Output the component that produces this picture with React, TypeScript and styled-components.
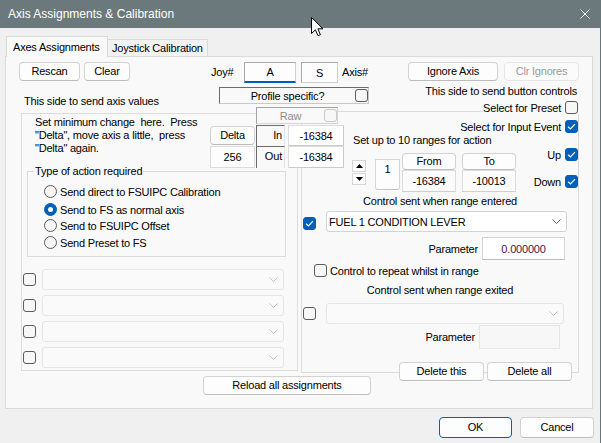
import React from "react";
import styled, { createGlobalStyle } from "styled-components";

const GlobalStyle = createGlobalStyle`
  html, body { margin: 0; padding: 0; background: #f0f0f0; }
  body { font-family: "Liberation Sans", Arial, sans-serif; font-size: 11px; letter-spacing: -0.2px; color: #000; }
  *, *::before, *::after { box-sizing: border-box; }
  button { font: inherit; letter-spacing: inherit; }
`;

const Window = styled.div`
  position: relative;
  width: 601px;
  height: 443px;
  background: #f0f0f0;
  border-right: 1px solid #68767a;
  display: flex;
  flex-direction: column;
  overflow: hidden;
`;

const TitleBar = styled.div`
  flex: none;
  height: 28px;
  background: #6b797c;
  color: #fff;
  font-size: 12px;
  letter-spacing: 0;
  display: flex;
  align-items: center;
  justify-content: space-between;
  padding: 0 10px 0 8px;
`;

const Cursor = styled.svg`
  position: absolute;
  left: 311px;
  top: 17px;
  z-index: 10;
`;

const Body = styled.div`
  flex: 1;
  display: flex;
  flex-direction: column;
  padding: 8px 0 0 5px;
`;

const TabStrip = styled.div`
  display: flex;
  align-items: flex-end;
  height: 20px;
  padding-left: 1px;
  position: relative;
  z-index: 1;
`;

const Tab = styled.div<{ $active?: boolean; $w: number }>`
  width: ${(p) => p.$w}px;
  height: ${(p) => (p.$active ? 21 : 17)}px;
  margin-bottom: ${(p) => (p.$active ? -1 : 0)}px;
  background: ${(p) => (p.$active ? "#f9f9f9" : "#f2f2f2")};
  border: 1px solid #d9d9d9;
  border-bottom: none;
  border-left: ${(p) => (p.$active ? "1px solid #d9d9d9" : "none")};
  padding-left: ${(p) => (p.$active ? 6 : 4)}px;
  display: flex;
  align-items: center;
  white-space: nowrap;
`;

const Panel = styled.div`
  position: relative;
  width: 588px;
  height: 353px;
  background: #f9f9f9;
  border: 1px solid #dadada;
  display: flex;
  flex-direction: column;
`;

const Footer = styled.div`
  display: flex;
  justify-content: flex-end;
  gap: 8px;
  margin-top: 8px;
  padding-right: 6px;
`;

const Btn = styled.button<{ $w: number; $h?: number; $default?: boolean }>`
  flex: none;
  width: ${(p) => p.$w}px;
  height: ${(p) => p.$h ?? 19}px;
  margin: 0;
  padding: 0;
  color: ${(p) => (p.disabled ? "#9a9a9a" : "#000")};
  background: ${(p) => (p.disabled ? "#fbfbfb" : "#fdfdfd")};
  border: 1px solid ${(p) => (p.$default ? "#005fb8" : p.disabled ? "#e6e6e6" : "#d2d2d2")};
  border-bottom-color: ${(p) => (p.$default ? "#005fb8" : p.disabled ? "#e6e6e6" : "#bdbdbd")};
  border-radius: 4px;
  display: flex;
  align-items: center;
  justify-content: center;
  white-space: nowrap;
  line-height: 13px;
`;

/* ---------- top row ---------- */
const TopRow = styled.div`
  display: flex;
  align-items: flex-start;
  height: 21px;
  margin-top: 5px;
  padding-left: 13px;
`;

const ButtonPair = styled.div<{ $gap: number }>`
  display: flex;
  gap: ${(p) => p.$gap}px;
`;

const JoyGroup = styled.div`
  display: flex;
  align-items: center;
  height: 21px;
  margin-left: 81px;
`;

const InlineLabel = styled.span<{ $w: number; $ml?: number }>`
  flex: none;
  width: ${(p) => p.$w}px;
  margin-left: ${(p) => p.$ml ?? 0}px;
  line-height: 21px;
  white-space: nowrap;
`;

const JoyEdit = styled.div<{ $w: number; $ml?: number; $focus?: boolean }>`
  flex: none;
  width: ${(p) => p.$w}px;
  height: 21px;
  margin-left: ${(p) => p.$ml ?? 0}px;
  background: #fdfdfd;
  border: 1px solid #cfcfcf;
  border-top-color: #a9a9a9;
  border-left-color: #a9a9a9;
  border-bottom: ${(p) => (p.$focus ? "2px solid #005fb8" : "1px solid #cfcfcf")};
  display: flex;
  justify-content: center;
  align-items: center;
`;

/* ---------- workspace ---------- */
const Workspace = styled.div`
  display: grid;
  grid-template-columns: 277px 278px;
  column-gap: 3px;
  margin-left: 15px;
  align-items: start;
`;

const Column = styled.div`
  display: flex;
  flex-direction: column;
`;

const LeftCaption = styled.div`
  margin: 12px 0 5px 3px;
  height: 13px;
  line-height: 13px;
  white-space: nowrap;
`;

const RightCaption = styled.div`
  margin-top: 2px;
  padding-right: 2px;
  height: 13px;
  line-height: 13px;
  text-align: right;
  white-space: nowrap;
`;

const CheckLabelRow = styled.div<{ $mt: number; $pr: number; $raised?: boolean }>`
  align-self: flex-end;
  display: flex;
  align-items: center;
  gap: 4px;
  height: 13px;
  margin-top: ${(p) => p.$mt}px;
  padding-right: ${(p) => p.$pr}px;
  white-space: nowrap;
  background: #f9f9f9;
  position: ${(p) => (p.$raised ? "relative" : "static")};
  z-index: ${(p) => (p.$raised ? 1 : "auto")};
`;

const Frame = styled.div<{ $h: number; $mt?: number }>`
  height: ${(p) => p.$h}px;
  margin-top: ${(p) => p.$mt ?? 0}px;
  border: 1px solid #dcdcdc;
  display: flex;
  flex-direction: column;
`;

const Description = styled.div`
  padding: 2px 0 0 13px;
  line-height: 13px;
  white-space: pre;
`;

const GroupBox = styled.div`
  margin: 16px 0 0 5px;
  width: 259px;
  height: 86px;
  border: 1px solid #dcdcdc;
  display: flex;
  flex-direction: column;
`;

const Legend = styled.div`
  align-self: flex-start;
  margin: -7px 0 0 6px;
  padding: 0 1px;
  line-height: 13px;
  background: #f9f9f9;
  white-space: nowrap;
`;

const RadioRow = styled.div<{ $mt: number }>`
  display: flex;
  align-items: center;
  gap: 3px;
  height: 13px;
  margin-top: ${(p) => p.$mt}px;
  padding-left: 16px;
  white-space: nowrap;
`;

const RadioDot = styled.span<{ $on?: boolean }>`
  flex: none;
  width: 13px;
  height: 13px;
  border-radius: 50%;
  border: 1px solid ${(p) => (p.$on ? "#005fb8" : "#5c5c5c")};
  background: ${(p) => (p.$on ? "#005fb8" : "#f6f6f6")};
  display: flex;
  align-items: center;
  justify-content: center;
  &::after {
    content: "";
    width: 5px;
    height: 5px;
    border-radius: 50%;
    background: #fff;
    display: ${(p) => (p.$on ? "block" : "none")};
  }
`;

const CheckBox = styled.span<{ $checked?: boolean; $disabled?: boolean; $mt?: number }>`
  flex: none;
  width: 13px;
  height: 13px;
  margin-top: ${(p) => p.$mt ?? 0}px;
  border-radius: 3px;
  border: 1px solid ${(p) => (p.$checked ? "#005fb8" : p.$disabled ? "#c8c8c8" : "#5c5c5c")};
  background: ${(p) => (p.$checked ? "#005fb8" : "#f7f7f7")};
  display: flex;
  align-items: center;
  justify-content: center;
`;

const ComboList = styled.div`
  display: flex;
  flex-direction: column;
  gap: 5px;
  margin-top: 12px;
  padding-left: 1px;
`;

const ComboRow = styled.div<{ $mt?: number; $align?: string; $gap: number; $pl?: number }>`
  display: flex;
  align-items: ${(p) => p.$align ?? "center"};
  gap: ${(p) => p.$gap}px;
  margin-top: ${(p) => p.$mt ?? 0}px;
  padding-left: ${(p) => p.$pl ?? 0}px;
`;

const Combo = styled.div<{ $w: number; $disabled?: boolean }>`
  flex: none;
  width: ${(p) => p.$w}px;
  height: 21px;
  background: ${(p) => (p.$disabled ? "#fafafa" : "#fff")};
  border: 1px solid ${(p) => (p.$disabled ? "#e6e6e6" : "#d3d3d3")};
  border-radius: 3px;
  display: flex;
  align-items: center;
  justify-content: space-between;
  padding: 0 5px 0 2px;
  white-space: nowrap;
`;

/* right frame */
const RangesCaption = styled.div`
  margin-top: 1px;
  padding-left: 51px;
  height: 13px;
  line-height: 13px;
  white-space: nowrap;
`;

const RangeBlock = styled.div`
  display: flex;
  align-items: flex-start;
  margin-top: 1px;
`;

const Spinner = styled.div`
  flex: none;
  width: 14px;
  margin: 12px 0 0 50px;
  display: flex;
  flex-direction: column;
  gap: 1px;
`;

const SpinBtn = styled.div`
  height: 12px;
  background: #fdfdfd;
  border: 1px solid #d6d6d6;
  display: flex;
  align-items: center;
  justify-content: center;
`;

const IndexBox = styled.div`
  flex: none;
  width: 25px;
  height: 31px;
  margin: 11px 0 0 9px;
  background: #fdfdfd;
  border: 1px solid #d6d6d6;
  border-bottom-color: #c4c4c4;
  border-radius: 0 0 3px 3px;
  text-align: center;
  padding-top: 3px;
  line-height: 13px;
`;

const RangeCol = styled.div<{ $ml: number }>`
  flex: none;
  width: 54px;
  margin: 5px 0 0 ${(p) => p.$ml}px;
  display: flex;
  flex-direction: column;
`;

const ValueBox = styled.div<{ $h: number }>`
  height: ${(p) => p.$h}px;
  background: #fbfbfb;
  border: 1px solid #dcdcdc;
  border-bottom-color: #cfcfcf;
  display: flex;
  align-items: center;
  justify-content: center;
`;

const UpDownCol = styled.div`
  flex: 1;
  display: flex;
  flex-direction: column;
  align-items: flex-end;
  gap: 14px;
`;

const MiniCheckRow = styled.div`
  display: flex;
  align-items: center;
  gap: 4px;
  height: 13px;
`;

const CenterCaption = styled.div<{ $mt: number }>`
  margin-top: ${(p) => p.$mt}px;
  height: 13px;
  line-height: 13px;
  text-align: center;
  white-space: nowrap;
`;

const ParamRow = styled.div<{ $mt: number; $pr: number }>`
  display: flex;
  justify-content: flex-end;
  align-items: center;
  gap: 4px;
  margin-top: ${(p) => p.$mt}px;
  padding-right: ${(p) => p.$pr}px;
`;

const ParamBox = styled.div<{ $w: number; $h: number; $disabled?: boolean }>`
  flex: none;
  width: ${(p) => p.$w}px;
  height: ${(p) => p.$h}px;
  background: ${(p) => (p.$disabled ? "#f7f7f7" : "#fff")};
  border: 1px solid ${(p) => (p.$disabled ? "#e6e6e6" : "#d4d4d4")};
  border-bottom-color: ${(p) => (p.$disabled ? "#e6e6e6" : "#bdbdbd")};
  color: #46154d;
  display: flex;
  align-items: center;
  justify-content: center;
`;

const RepeatRow = styled.div`
  display: flex;
  align-items: center;
  gap: 3px;
  height: 13px;
  margin-top: 4px;
  padding-left: 12px;
  white-space: nowrap;
`;

const DeleteRow = styled.div`
  display: flex;
  justify-content: flex-end;
  gap: 3px;
  margin-top: 13px;
  padding-right: 6px;
`;

const ReloadRow = styled.div`
  display: flex;
  margin: 3px 0 0 197px;
`;

/* overlay cluster in the middle */
const Cluster = styled.div`
  position: absolute;
  left: 204px;
  top: 30px;
  width: 134px;
  z-index: 2;
  display: flex;
  flex-direction: column;
`;

const SunkenBox = styled.div<{ $w: number; $ml: number; $mt?: number; $dim?: boolean }>`
  width: ${(p) => p.$w}px;
  height: 17px;
  margin: ${(p) => p.$mt ?? 0}px 0 0 ${(p) => p.$ml}px;
  background: #f9f9f9;
  border: 1px solid ${(p) => (p.$dim ? "#d6d6d6" : "#c8c8c8")};
  border-top-color: ${(p) => (p.$dim ? "#a2a2a2" : "#6b6b6b")};
  border-left-color: ${(p) => (p.$dim ? "#a2a2a2" : "#6b6b6b")};
  display: flex;
  align-items: center;
`;

const BoxText = styled.span<{ $muted?: boolean }>`
  flex: 1;
  text-align: center;
  color: ${(p) => (p.$muted ? "#8c8c8c" : "#000")};
  white-space: nowrap;
`;

const ValueGrid = styled.div`
  display: grid;
  grid-template-columns: 45px 29px 58px;
  grid-template-rows: 21px 22px;
  column-gap: 1px;
  margin-top: 1px;
  align-items: stretch;
`;

const DeltaCell = styled.div`
  display: flex;
  align-items: center;
`;

const PlainCell = styled.div`
  background: #fdfdfd;
  border: 1px solid #dcdcdc;
  display: flex;
  align-items: center;
  justify-content: center;
`;

const StaticCell = styled.div`
  background: #f9f9f9;
  border-top: 1px solid #6b6b6b;
  border-left: 1px solid #6b6b6b;
  border-right: 1px solid #e4e4e4;
  display: flex;
  justify-content: flex-end;
  padding: 3px 2px 0 0;
  line-height: 13px;
`;

const NumberCell = styled.div`
  margin-left: 2px;
  background: #fff;
  border: 1px solid #dcdcdc;
  border-bottom-color: #cacaca;
  border-right-color: #cacaca;
  display: flex;
  align-items: center;
  justify-content: center;
`;

/* ---------- icons ---------- */
const CheckMark = () => (
  <svg width="9" height="7" viewBox="0 0 9 7">
    <path d="M1 3.6 L3.4 6 L8 1.2" fill="none" stroke="#fff" strokeWidth="1.2" />
  </svg>
);

const Chevron = ({ color }: { color: string }) => (
  <svg width="9" height="5" viewBox="0 0 9 5">
    <path d="M0.5 0.5 L4.5 4.5 L8.5 0.5" fill="none" stroke={color} strokeWidth="1" />
  </svg>
);

const Tri = ({ down }: { down?: boolean }) => (
  <svg width="7" height="4" viewBox="0 0 7 4">
    <path d={down ? "M0 0 L7 0 L3.5 4 Z" : "M0 4 L7 4 L3.5 0 Z"} fill="#000" />
  </svg>
);

const Check = ({ checked, disabled, mt }: { checked?: boolean; disabled?: boolean; mt?: number }) => (
  <CheckBox $checked={checked} $disabled={disabled} $mt={mt}>
    {checked && <CheckMark />}
  </CheckBox>
);

const radios = [
  { label: "Send direct to FSUIPC Calibration", mt: 7 },
  { label: "Send to FS as normal axis", mt: 5, on: true },
  { label: "Send to FSUIPC Offset", mt: 3 },
  { label: "Send Preset to FS", mt: 4 },
];

export default function App() {
  return (
    <>
      <GlobalStyle />
      <Window>
        <TitleBar>
          <span>Axis Assignments &amp; Calibration</span>
          <svg width="10" height="10" viewBox="0 0 10 10">
            <path d="M0.5 0.5 L9.5 9.5 M9.5 0.5 L0.5 9.5" stroke="#fff" strokeWidth="1" />
          </svg>
        </TitleBar>
        <Cursor width="13" height="20" viewBox="0 0 13 20">
          <path
            d="M0.5 0.5 L0.5 16.5 L4.4 12.8 L7 18.7 L9.4 17.7 L6.9 11.8 L12 11.8 Z"
            fill="#fff"
            stroke="#000"
            strokeWidth="1"
            strokeLinejoin="round"
          />
        </Cursor>
        <Body>
          <TabStrip>
            <Tab $active $w={102}>Axes Assignments</Tab>
            <Tab $w={100}>Joystick Calibration</Tab>
          </TabStrip>
          <Panel>
            <TopRow>
              <ButtonPair $gap={4}>
                <Btn $w={61}>Rescan</Btn>
                <Btn $w={46}>Clear</Btn>
              </ButtonPair>
              <JoyGroup>
                <InlineLabel $w={33}>Joy#</InlineLabel>
                <JoyEdit $w={52} $focus>A</JoyEdit>
                <JoyEdit $w={37} $ml={5}>S</JoyEdit>
                <InlineLabel $w={66} $ml={4}>Axis#</InlineLabel>
              </JoyGroup>
              <ButtonPair $gap={6}>
                <Btn $w={90}>Ignore Axis</Btn>
                <Btn $w={75} disabled>Clr Ignores</Btn>
              </ButtonPair>
            </TopRow>

            <Workspace>
              <Column>
                <LeftCaption>This side to send axis values</LeftCaption>
                <Frame $h={258}>
                  <Description>
                    {"Set minimum change  here.  Press\n\"Delta\", move axis a little,  press\n\"Delta\" again."}
                  </Description>
                  <GroupBox>
                    <Legend>Type of action required</Legend>
                    {radios.map((r) => (
                      <RadioRow key={r.label} $mt={r.mt}>
                        <RadioDot $on={r.on} />
                        {r.label}
                      </RadioRow>
                    ))}
                  </GroupBox>
                  <ComboList>
                    {[0, 1, 2, 3].map((i) => (
                      <ComboRow key={i} $gap={6}>
                        <Check />
                        <Combo $w={242} $disabled>
                          <span />
                          <Chevron color="#c4c4c4" />
                        </Combo>
                      </ComboRow>
                    ))}
                  </ComboList>
                </Frame>
              </Column>

              <Column>
                <RightCaption>This side to send button controls</RightCaption>
                <CheckLabelRow $mt={3} $pr={1} $raised>
                  Select for Preset
                  <Check />
                </CheckLabelRow>
                <Frame $h={262} $mt={-3}>
                  <CheckLabelRow $mt={8} $pr={0}>
                    Select for Input Event
                    <Check checked />
                  </CheckLabelRow>
                  <RangesCaption>Set up to 10 ranges for action</RangesCaption>
                  <RangeBlock>
                    <Spinner>
                      <SpinBtn><Tri /></SpinBtn>
                      <SpinBtn><Tri down /></SpinBtn>
                    </Spinner>
                    <IndexBox>1</IndexBox>
                    <RangeCol $ml={2}>
                      <Btn $w={54} $h={17}>From</Btn>
                      <ValueBox $h={22}>-16384</ValueBox>
                    </RangeCol>
                    <RangeCol $ml={6}>
                      <Btn $w={54} $h={17}>To</Btn>
                      <ValueBox $h={22}>-10013</ValueBox>
                    </RangeCol>
                    <UpDownCol>
                      <MiniCheckRow>Up<Check checked /></MiniCheckRow>
                      <MiniCheckRow>Down<Check checked /></MiniCheckRow>
                    </UpDownCol>
                  </RangeBlock>
                  <CenterCaption $mt={3}>Control sent when range entered</CenterCaption>
                  <ComboRow $mt={3} $align="flex-start" $gap={10} $pl={1}>
                    <Check checked mt={6} />
                    <Combo $w={241}>
                      <span>FUEL 1 CONDITION LEVER</span>
                      <Chevron color="#606060" />
                    </Combo>
                  </ComboRow>
                  <ParamRow $mt={5} $pr={13}>
                    Parameter
                    <ParamBox $w={83} $h={23}>0.000000</ParamBox>
                  </ParamRow>
                  <RepeatRow>
                    <Check />
                    Control to repeat whilst in range
                  </RepeatRow>
                  <CenterCaption $mt={7}>Control sent when range exited</CenterCaption>
                  <ComboRow $mt={6} $align="flex-start" $gap={10} $pl={1}>
                    <Check mt={4} />
                    <Combo $w={238} $disabled>
                      <span />
                      <Chevron color="#c4c4c4" />
                    </Combo>
                  </ComboRow>
                  <ParamRow $mt={1} $pr={18}>
                    Parameter
                    <ParamBox $w={81} $h={24} $disabled />
                  </ParamRow>
                  <DeleteRow>
                    <Btn $w={85}>Delete this</Btn>
                    <Btn $w={85}>Delete all</Btn>
                  </DeleteRow>
                </Frame>
              </Column>
            </Workspace>

            <ReloadRow>
              <Btn $w={168}>Reload all assignments</Btn>
            </ReloadRow>

            <Cluster>
              <SunkenBox $w={150} $ml={9}>
                <BoxText>Profile specific?</BoxText>
                <Check />
              </SunkenBox>
              <SunkenBox $w={82} $ml={46} $mt={3} $dim>
                <BoxText $muted>Raw</BoxText>
                <Check disabled />
              </SunkenBox>
              <ValueGrid>
                <DeltaCell>
                  <Btn $w={45} $h={19}>Delta</Btn>
                </DeltaCell>
                <StaticCell>In</StaticCell>
                <NumberCell>-16384</NumberCell>
                <PlainCell>256</PlainCell>
                <StaticCell>Out</StaticCell>
                <NumberCell>-16384</NumberCell>
              </ValueGrid>
            </Cluster>
          </Panel>
          <Footer>
            <Btn $w={73} $h={21} $default>OK</Btn>
            <Btn $w={74} $h={21}>Cancel</Btn>
          </Footer>
        </Body>
      </Window>
    </>
  );
}
